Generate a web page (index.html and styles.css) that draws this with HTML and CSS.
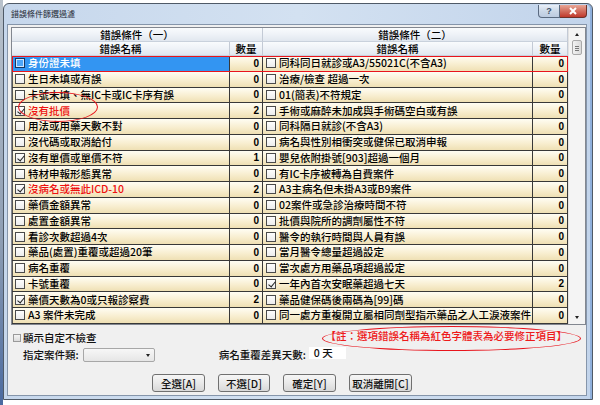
FILE: index.html
```html
<!DOCTYPE html>
<html lang="zh-Hant">
<head>
<meta charset="utf-8">
<title>錯誤條件篩選過濾</title>
<link rel="stylesheet" href="styles.css">
</head>
<body>
<div class="bgwin"></div>
<div class="win">
  <div class="titlebar">
    <span class="title">錯誤條件篩選過濾</span>
    <div class="ctrls">
      <span class="tbtn help">?</span>
      <span class="tbtn close"><svg viewBox="0 0 10 8" width="10" height="8"><path d="M2 1 L8 7 M8 1 L2 7" stroke="#fff" stroke-width="2" fill="none"/></svg></span>
    </div>
  </div>
  <div class="client">
    <div class="grid">
      <div class="tables">
        <div class="tbl t1">
          <div class="h1">錯誤條件（一）</div>
          <div class="h2"><span class="hn">錯誤名稱</span><span class="hc">數量</span></div>
          <div class="row sel"><div class="nm"><i class="cb"></i><span>身份證未填</span></div><div class="ct">0</div></div>
          <div class="row"><div class="nm"><i class="cb"></i><span>生日未填或有誤</span></div><div class="ct">0</div></div>
          <div class="row"><div class="nm"><i class="cb"></i><span>卡號未填、無IC卡或IC卡序有誤</span></div><div class="ct">0</div></div>
          <div class="row"><div class="nm red"><i class="cb on"></i><span>沒有批價</span></div><div class="ct">2</div></div>
          <div class="row"><div class="nm"><i class="cb"></i><span>用法或用藥天數不對</span></div><div class="ct">0</div></div>
          <div class="row"><div class="nm"><i class="cb"></i><span>沒代碼或取消給付</span></div><div class="ct">0</div></div>
          <div class="row"><div class="nm"><i class="cb on"></i><span>沒有單價或單價不符</span></div><div class="ct">1</div></div>
          <div class="row"><div class="nm"><i class="cb"></i><span>特材申報形態異常</span></div><div class="ct">0</div></div>
          <div class="row"><div class="nm red"><i class="cb on"></i><span>沒病名或無此ICD-10</span></div><div class="ct">2</div></div>
          <div class="row"><div class="nm"><i class="cb"></i><span>藥價金額異常</span></div><div class="ct">0</div></div>
          <div class="row"><div class="nm"><i class="cb"></i><span>處置金額異常</span></div><div class="ct">0</div></div>
          <div class="row"><div class="nm"><i class="cb"></i><span>看診次數超過4次</span></div><div class="ct">0</div></div>
          <div class="row"><div class="nm"><i class="cb"></i><span>藥品(處置)重覆或超過20筆</span></div><div class="ct">0</div></div>
          <div class="row"><div class="nm"><i class="cb"></i><span>病名重覆</span></div><div class="ct">0</div></div>
          <div class="row"><div class="nm"><i class="cb"></i><span>卡號重覆</span></div><div class="ct">0</div></div>
          <div class="row"><div class="nm"><i class="cb on"></i><span>藥價天數為0或只報診察費</span></div><div class="ct">2</div></div>
          <div class="row"><div class="nm"><i class="cb"></i><span>A3 案件未完成</span></div><div class="ct">0</div></div>
        </div>
        <div class="tbl t2">
          <div class="h1">錯誤條件（二）</div>
          <div class="h2"><span class="hn">錯誤名稱</span><span class="hc">數量</span></div>
          <div class="row"><div class="nm"><i class="cb"></i><span>同科同日就診或A3/55021C(不含A3)</span></div><div class="ct">0</div></div>
          <div class="row"><div class="nm"><i class="cb"></i><span>治療/檢查 超過一次</span></div><div class="ct">0</div></div>
          <div class="row"><div class="nm"><i class="cb"></i><span>01(簡表)不符規定</span></div><div class="ct">0</div></div>
          <div class="row"><div class="nm"><i class="cb"></i><span>手術或麻醉未加成與手術碼空白或有誤</span></div><div class="ct">0</div></div>
          <div class="row"><div class="nm"><i class="cb"></i><span>同科隔日就診(不含A3)</span></div><div class="ct">0</div></div>
          <div class="row"><div class="nm"><i class="cb"></i><span>病名與性別相衝突或健保已取消申報</span></div><div class="ct">0</div></div>
          <div class="row"><div class="nm"><i class="cb"></i><span>嬰兒依附掛號[903]超過一個月</span></div><div class="ct">0</div></div>
          <div class="row"><div class="nm"><i class="cb"></i><span>有IC卡序被轉為自費案件</span></div><div class="ct">0</div></div>
          <div class="row"><div class="nm"><i class="cb"></i><span>A3主病名但未掛A3或B9案件</span></div><div class="ct">0</div></div>
          <div class="row"><div class="nm"><i class="cb"></i><span>02案件或急診治療時間不符</span></div><div class="ct">0</div></div>
          <div class="row"><div class="nm"><i class="cb"></i><span>批價與院所的調劑屬性不符</span></div><div class="ct">0</div></div>
          <div class="row"><div class="nm"><i class="cb"></i><span>醫令的執行時間與人員有誤</span></div><div class="ct">0</div></div>
          <div class="row"><div class="nm"><i class="cb"></i><span>當月醫令總量超過設定</span></div><div class="ct">0</div></div>
          <div class="row"><div class="nm"><i class="cb"></i><span>當次處方用藥品項超過設定</span></div><div class="ct">0</div></div>
          <div class="row"><div class="nm"><i class="cb on"></i><span>一年內首次安眠藥超過七天</span></div><div class="ct">2</div></div>
          <div class="row"><div class="nm"><i class="cb"></i><span>藥品健保碼後兩碼為[99]碼</span></div><div class="ct">0</div></div>
          <div class="row"><div class="nm"><i class="cb"></i><span>同一處方重複開立屬相同劑型指示藥品之人工淚液案件</span></div><div class="ct">0</div></div>
        </div>
        <div class="mark-rect"></div>
        <div class="mark-oval"></div>
      </div>
      <div class="vscroll">
        <span class="arr up"></span>
        <span class="thumb"></span>
        <span class="track"></span>
        <span class="arr dn"></span>
      </div>
    </div>
    <div class="opts">
      <div class="line1">
        <label class="chk"><i class="sq"></i>顯示自定不檢查</label>
        <div class="note">【註：選項錯誤名稱為紅色字體表為必要修正項目】<span class="note-oval"></span></div>
      </div>
      <div class="line2">
        <span class="lbl">指定案件類:</span>
        <span class="combo"><span class="caret"></span></span>
        <span class="lbl days">病名重覆差異天數:</span>
        <span class="num">0 天</span>
      </div>
      <div class="btns">
        <button class="b1">全選[A]</button>
        <button class="b2">不選[D]</button>
        <button class="b3">確定[Y]</button>
        <button class="b4">取消離開[C]</button>
      </div>
    </div>
  </div>
</div>
</body>
</html>
```
FILE: styles.css
```css
* { box-sizing: border-box; margin: 0; padding: 0; }
html, body { width: 600px; height: 405px; overflow: hidden; background: #ffffff; }
body {
  font-family: "Noto Sans CJK TC", "Liberation Sans", sans-serif;
  font-size: 10.5px;
  font-weight: 500;
  color: #000;
  position: relative;
  padding: 3px 0 0 3px;
}
.bgwin {
  position: absolute; left: 0; top: 0; width: 3px; height: 405px;
  background: linear-gradient(#b9c2cc, #8d9db3 60%, #4a6aa0);
}
.win {
  width: 590px; height: 397px;
  border: 1px solid #4f5a67;
  border-radius: 6px 6px 0 0;
  background: linear-gradient(90deg, #c6d7ec, #d3e1f1 50%, #c2d4eb);
  padding: 0 5px 3px 3px;
  display: flex; flex-direction: column;
  box-shadow: inset -2px 0 0 #8fb0dc;
}
.titlebar {
  height: 20px; flex: none;
  display: flex; align-items: flex-start; justify-content: space-between;
}
.title { font-size: 8px; font-weight: 400; color: #1c2733; padding: 5px 0 0 4px; line-height: 10px; }
.ctrls { display: flex; }
.tbtn {
  height: 13px; display: flex; align-items: center; justify-content: center;
  border: 1px solid #5a6a80; border-top: none;
  font-family: "Liberation Sans", sans-serif; font-weight: bold; font-size: 9px;
}
.help { width: 22px; border-radius: 0 0 0 4px; color: #3d4f66;
  background: linear-gradient(#e9eff7, #cbd8e8 50%, #bccbe0); margin-top: 1px; }
.close { width: 27px; border-radius: 0 0 4px 0; border-color: #6e3129; border-left: none;
  background: linear-gradient(#e9a797, #d26e5e 50%, #c0392b); margin-top: 1px; }

.client {
  width: 580px; height: 372px; flex: none;
  border: 1px solid #8595aa;
  background: #f0f0f0;
  padding: 2px 0 0 3px;
  display: flex; flex-direction: column;
}
.grid {
  width: 575px; height: 298px; flex: none;
  border: 1px solid #828790;
  background: #fff;
  display: flex;
}
.tables { display: flex; position: relative; width: 556px; }
.tbl { display: flex; flex-direction: column; }
.t1 { width: 251px; }
.t2 { width: 305px; }
.h1, .h2 {
  height: 14px; line-height: 13px;
  background: linear-gradient(#f9fbfd, #eef2f7 50%, #e1e7ef);
  border-bottom: 1px solid #c9d1dc;
  border-right: 1px solid #c3cad5;
  text-align: center; color: #000;
}
.h2 { display: flex; }
.hn { flex: 1; border-right: 1px solid #c3cad5; }
.t1 .hc { width: 32px; }
.t2 .hc { width: 34px; }
.row {
  height: 15.75px; display: flex;
  border-bottom: 1px solid #383838;
  background: linear-gradient(#fffdf3, #f8eed0 55%, #efe0b4);
}
.nm {
  flex: 1; display: flex; align-items: center; gap: 3px;
  border-right: 1px solid #383838;
  padding-left: 3px; white-space: nowrap; overflow: hidden;
  line-height: 14px; color: #000;
}
.t1 .nm { border-left: 1px solid #555; padding-left: 2px; }
.ct {
  display: flex; align-items: center; justify-content: flex-end;
  padding-right: 3px; border-right: 1px solid #383838;
  font-family: "Liberation Sans", sans-serif; font-weight: bold; font-size: 10px; color: #000;
}
.t1 .ct { width: 33px; }
.t2 .ct { width: 35px; }
.nm.red { color: #ee1111; }
.sel .nm { background: #3395f2; color: #fff; }
.cb {
  width: 10px; height: 10px; flex: none; position: relative;
  border: 1px solid #4a4a4a;
  background: linear-gradient(#fdfdfd, #ececec);
}
.sel .cb { border-color: #15355f; background: #4ea6f8; box-shadow: inset 0 0 0 1px #cfe6ff; }
.cb.on::after {
  content: ""; position: absolute; left: 2.5px; top: 0px;
  width: 3px; height: 6px;
  border: solid #222; border-width: 0 1.5px 1.5px 0;
  transform: rotate(40deg);
}
.mark-rect {
  position: absolute; left: 0; top: 27.5px; width: 556px; height: 16.5px;
  border: 1.5px solid #e8141c; pointer-events: none;
}
.mark-oval {
  position: absolute; left: 6px; top: 64px; width: 80px; height: 30px;
  border: 1.5px solid #e8141c; border-radius: 50%;
}
.vscroll {
  width: 17px; flex: none; display: flex; flex-direction: column; align-items: center;
  background: #f4f4f4; border-left: 1px solid #e2e2e2;
}
.arr { width: 0; height: 0; border-left: 2.5px solid transparent; border-right: 2.5px solid transparent; }
.arr.up { border-bottom: 3px solid #222; margin-top: 5px; }
.arr.dn { border-top: 3px solid #222; margin-bottom: 5px; }
.thumb {
  width: 10px; height: 15px; margin-top: 4px;
  border: 1px solid #a9a9a9; border-radius: 2px;
  background:
    linear-gradient(#777, #777) 2px 5px / 4px 1px no-repeat,
    linear-gradient(#777, #777) 2px 7px / 4px 1px no-repeat,
    linear-gradient(#777, #777) 2px 9px / 4px 1px no-repeat,
    linear-gradient(90deg, #f2f2f2, #dadada);
}
.track { flex: 1; }

.opts { display: flex; flex-direction: column; }
.line1 { height: 16px; margin-top: 3px; display: flex; align-items: center; }
.chk { display: flex; align-items: center; gap: 2px; padding: 3px 0 0 2px; color: #111; }
.sq { width: 8px; height: 8px; border: 1px solid #9a9a9a; background: linear-gradient(#f4f4f4, #dcdcdc); }
.note { margin-left: auto; margin-right: 19px; color: #ee1a1a; position: relative; line-height: 16px; }
.note-oval {
  position: absolute; left: -4px; right: -14px; top: -2px; bottom: -7px;
  border: 1.5px solid #e8141c; border-radius: 50%;
}
.line2 { height: 15px; margin-top: 3px; display: flex; align-items: center; padding-left: 12px; }
.lbl { color: #111; }
.combo {
  width: 72px; height: 14px; margin-left: 4px; position: relative;
  border: 1px solid #a7a7a7; border-radius: 2px;
  background: linear-gradient(#f7f7f7, #e6e6e6);
}
.caret {
  position: absolute; right: 4px; top: 5px; width: 0; height: 0;
  border-left: 2.5px solid transparent; border-right: 2.5px solid transparent; border-top: 3px solid #222;
}
.days { margin-left: 64px; }
.num {
  width: 37px; height: 12px; margin-left: 3px; align-self: flex-start;
  background: #fff; padding-left: 5px; line-height: 12px; color: #111;
}
.btns { display: flex; gap: 13px; margin-top: 12px; padding-left: 141px; }
.btns button {
  height: 18px; font: inherit; color: #111;
  border: 1px solid #707070; border-radius: 3px;
  background: linear-gradient(#f6f6f6, #e9e9e9 50%, #d8d8d8);
}
.b1 { width: 53px; }
.b2 { width: 52px; }
.b3 { width: 53px; }
.b4 { width: 63px; }
```
